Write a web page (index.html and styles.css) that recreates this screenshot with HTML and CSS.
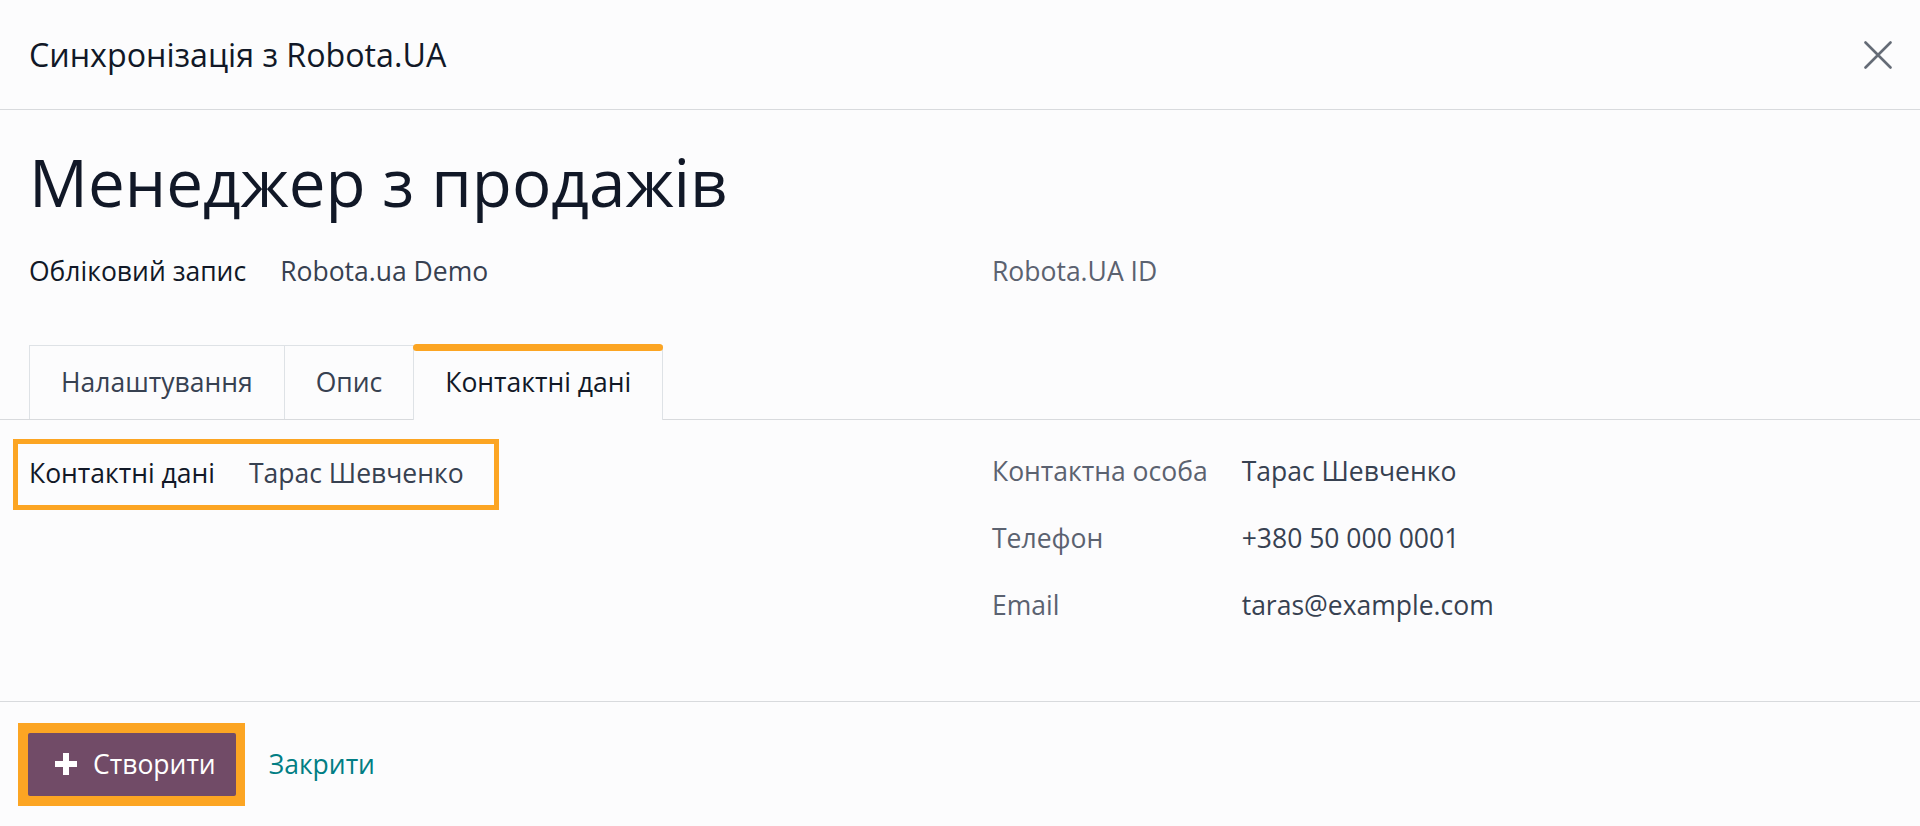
FILE: index.html
```html
<!DOCTYPE html>
<html lang="uk">

<head>
  <meta charset="UTF-8">
  <title>Синхронізація з Robota.UA</title>
  <link rel="stylesheet" href="styles.css">
</head>

<body>
  <header class="dialog-header">
    <h4 class="dialog-title">Синхронізація з Robota.UA</h4>
    <button class="btn-close" aria-label="Закрити">
      <svg width="28" height="28" viewBox="0 0 28 28">
        <path d="M1.5 1.5L26.5 26.5M26.5 1.5L1.5 26.5" stroke="#646b76" stroke-width="2.6" stroke-linecap="round" fill="none"/>
      </svg>
    </button>
  </header>

  <main class="dialog-body">
    <h1 class="record-title">Менеджер з продажів</h1>

    <div class="group-row">
      <div class="group">
        <span class="field-label">Обліковий запис</span>
        <span class="field-value">Robota.ua Demo</span>
      </div>
      <div class="group">
        <span class="field-label muted">Robota.UA ID</span>
        <span class="field-value"></span>
      </div>
    </div>

    <div class="notebook">
      <ul class="tabs">
        <li class="tab">Налаштування</li>
        <li class="tab">Опис</li>
        <li class="tab active">Контактні дані</li>
      </ul>

      <div class="tab-pane group-row">
        <div class="group-single">
          <div class="field highlight">
            <span class="field-label">Контактні дані</span>
            <span class="field-value">Тарас Шевченко</span>
          </div>
        </div>
        <div class="group tall">
          <span class="field-label muted">Контактна особа</span>
          <span class="field-value">Тарас Шевченко</span>
          <span class="field-label muted">Телефон</span>
          <span class="field-value">+380 50 000 0001</span>
          <span class="field-label muted">Email</span>
          <span class="field-value">taras@example.com</span>
        </div>
      </div>
    </div>
  </main>

  <footer class="dialog-footer">
    <span class="focus-ring">
      <button class="btn-primary">
        <svg width="22" height="22" viewBox="0 0 22 22">
          <path d="M8 0h6v8h8v6h-8v8H8v-8H0V8h8z" fill="#fff"/>
        </svg>
        Створити
      </button>
    </span>
    <a class="btn-link" href="#">Закрити</a>
  </footer>
</body>

</html>
```

FILE: styles.css
```css
:root {
  --bg-color: #fcfcfd;
  --text-dark: #111827;
  --text-color: #374151;
  --text-muted: #5b6270;
  --border-color: #d8dadd;
  --tab-border: #dee2e6;
  --accent: #fca523;
  --primary: #714b67;
  --link: #017e84;
}

* {
  box-sizing: border-box;
}

body {
  margin: 0;
  height: 100vh;
  display: flex;
  flex-direction: column;
  font-family: "Open Sans", sans-serif;
  font-size: 26.5px;
  line-height: 39px;
  color: var(--text-color);
  background: var(--bg-color);
}

.dialog-header {
  flex-shrink: 0;
  height: 110px;
  display: flex;
  align-items: center;
  justify-content: space-between;
  padding: 0 28px 0 29px;
  border-bottom: 1px solid var(--border-color);
}

.dialog-title {
  margin: 0;
  font-size: 32.2px;
  font-weight: 400;
  color: var(--text-dark);
}

.btn-close {
  display: flex;
  width: 28px;
  height: 28px;
  padding: 0;
  border: 0;
  background: none;
  cursor: pointer;
}

.dialog-body {
  flex: 1;
}

.record-title {
  margin: 33px 29px 30px;
  font-size: 65.5px;
  font-weight: 400;
  line-height: 1.2;
  color: var(--text-dark);
}

.group-row {
  display: grid;
  grid-template-columns: 1fr 1fr;
  column-gap: 64px;
  padding: 0 29px;
}

.group {
  display: grid;
  grid-template-columns: max-content 1fr;
  column-gap: 34px;
  align-content: start;
}

.group.tall {
  grid-auto-rows: 67px;
  align-items: center;
}

.field-label {
  font-weight: 500;
  color: var(--text-dark);
}

.field-label.muted {
  font-weight: 400;
  color: var(--text-muted);
}

.notebook {
  margin-top: 54px;
}

.tabs {
  display: flex;
  margin: 0;
  padding: 0 29px;
  list-style: none;
  border-bottom: 1px solid var(--border-color);
}

.tab {
  position: relative;
  padding: 17px 31px;
  border: 1px solid var(--tab-border);
  border-bottom: 0;
  margin-right: -1px;
  color: var(--text-color);
  cursor: pointer;
}

.tab.active {
  margin-bottom: -1px;
  padding-bottom: 18px;
  background: var(--bg-color);
  color: var(--text-dark);
}

.tab.active::before {
  content: "";
  position: absolute;
  top: -2px;
  left: -1px;
  right: -1px;
  height: 7px;
  border-radius: 4px;
  background: var(--accent);
}

.tab-pane {
  padding-top: 18px;
}

.field {
  display: inline-flex;
  gap: 34px;
}

.field.highlight {
  margin: 1px 0 0 -16px;
  padding: 10px 30px 12px 11px;
  border: 5px solid var(--accent);
}

.dialog-footer {
  flex-shrink: 0;
  height: 125px;
  display: flex;
  align-items: center;
  padding-left: 18px;
  border-top: 1px solid var(--border-color);
}

.focus-ring {
  display: flex;
  padding: 10px 9px 10px 10px;
  background: var(--accent);
}

.btn-primary {
  display: flex;
  align-items: center;
  gap: 16px;
  height: 63px;
  padding: 0 20px 0 27px;
  border: 0;
  border-radius: 2px;
  background: var(--primary);
  color: #fff;
  font-family: inherit;
  font-size: 26.5px;
  cursor: pointer;
}

.btn-link {
  margin-left: 24px;
  color: var(--link);
  text-decoration: none;
}
```
